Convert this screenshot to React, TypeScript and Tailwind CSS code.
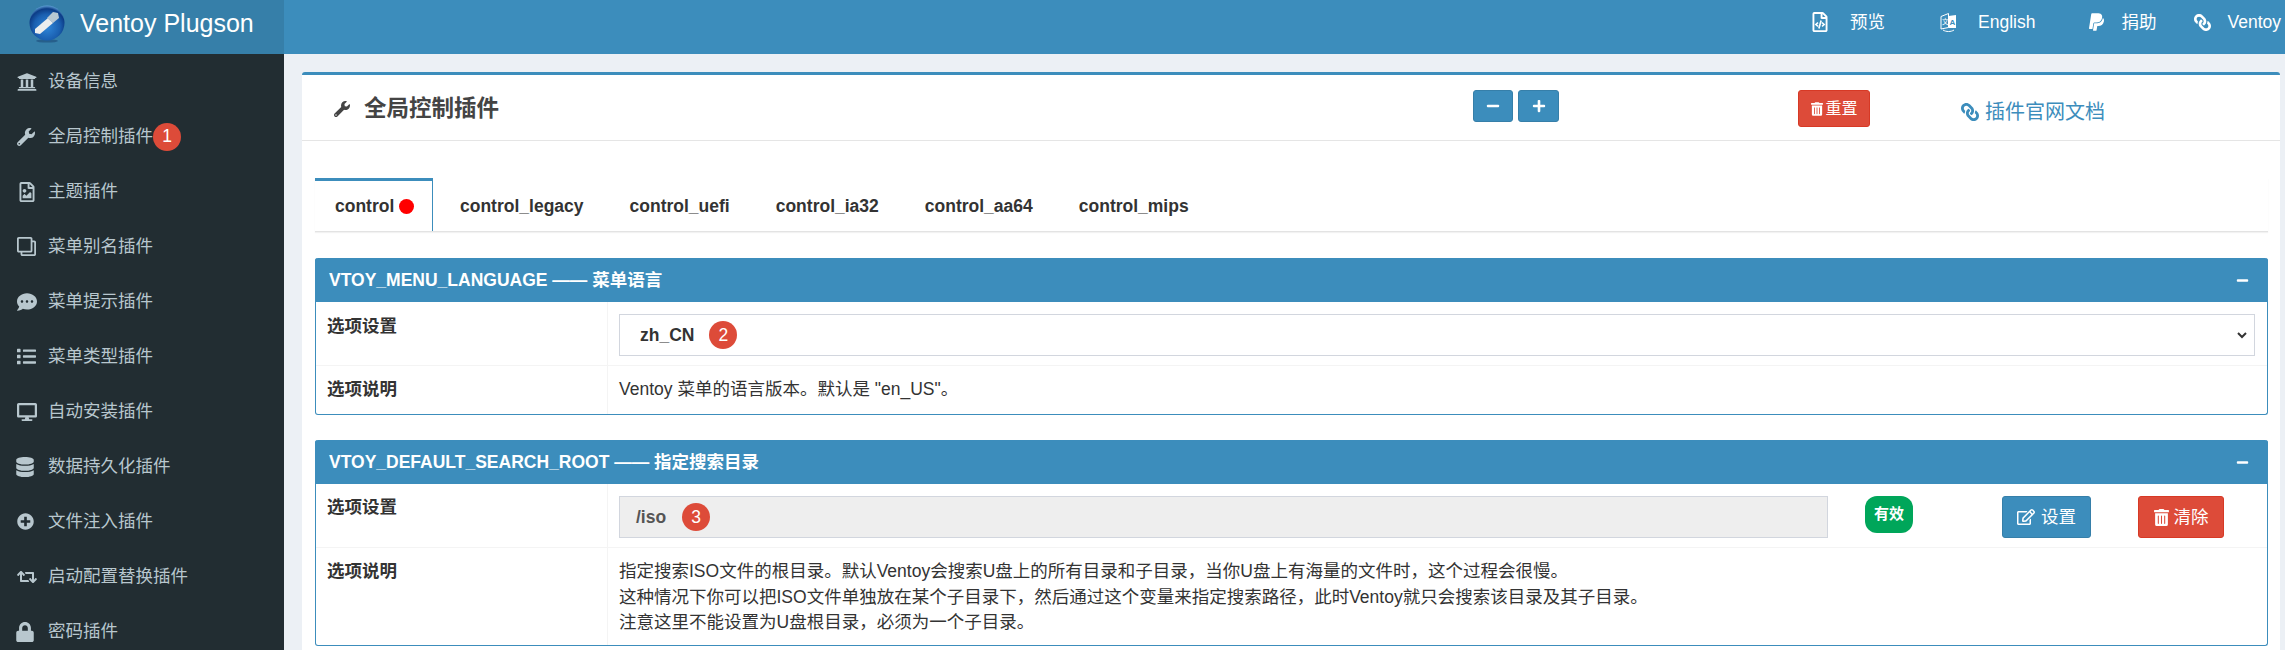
import { FaUniversity, FaWrench, FaRegFileImage, FaRegClone, FaCommentDots, FaList, FaDesktop, FaDatabase, FaPlusCircle, FaRetweet, FaLock, FaRegFileCode, FaPaypal, FaLink, FaTrashAlt, FaRegEdit, FaMinus, FaPlus } from 'react-icons/fa'

const font = { fontFamily: '"Liberation Sans", "Noto Sans CJK SC", sans-serif' }

const menu = [
  { icon: FaUniversity, label: '设备信息', cls: 'w-[20px] h-[20px]' },
  { icon: FaWrench, label: '全局控制插件', badge: '1', cls: 'w-[18px] h-[18px]' },
  { icon: FaRegFileImage, label: '主题插件', cls: 'w-[20px] h-[20px]' },
  { icon: FaRegClone, label: '菜单别名插件', cls: 'w-[19px] h-[19px] -scale-x-100' },
  { icon: FaCommentDots, label: '菜单提示插件', cls: 'w-[20px] h-[20px]' },
  { icon: FaList, label: '菜单类型插件', cls: 'w-[19px] h-[19px]' },
  { icon: FaDesktop, label: '自动安装插件', cls: 'w-[20px] h-[20px]' },
  { icon: FaDatabase, label: '数据持久化插件', cls: 'w-[20px] h-[20px] -ml-[2px]' },
  { icon: FaPlusCircle, label: '文件注入插件', cls: 'w-[17px] h-[17px]' },
  { icon: FaRetweet, label: '启动配置替换插件', cls: 'w-[20px] h-[20px]' },
  { icon: FaLock, label: '密码插件', cls: 'w-[20px] h-[20px] -ml-[2px]' },
]

const tabs = ['control_legacy', 'control_uefi', 'control_ia32', 'control_aa64', 'control_mips']

function Logo() {
  return (
    <svg viewBox="0 0 36 38" className="w-[36px] h-[38px] shrink-0">
      <defs>
        <radialGradient id="ball" cx="50%" cy="62%" r="62%">
          <stop offset="0%" stopColor="#2f86d8" />
          <stop offset="60%" stopColor="#1a5fb0" />
          <stop offset="85%" stopColor="#0c3c86" />
          <stop offset="100%" stopColor="#5f9fd6" />
        </radialGradient>
      </defs>
      <ellipse cx="18" cy="36" rx="11" ry="1.6" fill="#1c4a78" opacity="0.6" />
      <circle cx="18" cy="18" r="17.5" fill="url(#ball)" />
      <path d="M6 24l13-11 5 5-13 11-5-1z" fill="#eceeee" />
      <path d="M18 13l6-6 5 1 1 5-6 5z" fill="#b9c8d2" />
    </svg>
  )
}

function LanguageIcon() {
  return (
    <svg viewBox="0 0 17 20" className="w-[17px] h-[20px]">
      <path d="M1 4.5l7.5-3v14l-7.5 1.5z" fill="none" stroke="#fff" strokeWidth="1" />
      <path d="M8.5 4l7.5-1v13l-7.5 0z" fill="#fff" />
      <path d="M3 18c3 2 8 2 11 0" fill="none" stroke="#fff" strokeWidth="1" />
      <text x="2" y="12" fontSize="6.5" fill="#fff">文</text>
      <text x="9.6" y="12.5" fontSize="8" fontWeight="700" fill="#3c8dbc">A</text>
    </svg>
  )
}

function Badge({ n, className = '' }: { n: string; className?: string }) {
  return (
    <span className={`w-[28px] h-[28px] rounded-full bg-[#dd4b39] text-white text-[17.5px] font-normal flex items-center justify-center shrink-0 ${className}`}>
      {n}
    </span>
  )
}

function Panel({ title, children }: { title: string; children: React.ReactNode }) {
  return (
    <div className="border border-t-0 border-[#3c8dbc] rounded-[3px] bg-white">
      <div className="h-[44px] bg-[#3c8dbc] -mx-px rounded-t-[3px] flex items-center justify-between pl-[14px] pr-[19px] text-white font-bold text-[17.5px]">
        <span>{title}</span>
        <FaMinus className="w-[13px] h-[13px]" />
      </div>
      {children}
    </div>
  )
}

function Row({ label, last, h, pt, children }: { label: string; last?: boolean; h: string; pt: string; children: React.ReactNode }) {
  return (
    <div className={`flex ${h} ${last ? '' : 'border-b border-[#f4f4f4]'}`}>
      <div className={`w-[292px] shrink-0 border-r border-[#f4f4f4] pl-[11px] font-bold text-[#333] leading-[25px] ${pt}`}>{label}</div>
      <div className="flex-1 pl-[11px] pr-[12px] min-w-0">{children}</div>
    </div>
  )
}

export default function App() {
  return (
    <div className="w-[2285px] h-[650px] overflow-hidden flex flex-col text-[17.5px] text-[#333]" style={font}>
      <header className="h-[54px] flex bg-[#3c8dbc] text-white shrink-0">
        <div className="w-[284px] bg-[#367fa9] flex items-center pl-[29px] pb-[7px]">
          <Logo />
          <span className="ml-[15px] text-[25px]">Ventoy Plugson</span>
        </div>
        <div className="flex-1 flex items-center justify-end pr-[4px] pb-[10px]">
          <div className="flex items-center gap-[20px]">
            <FaRegFileCode className="w-[20px] h-[20px]" />
            <span>预览</span>
          </div>
          <div className="flex items-center gap-[21px] ml-[55px]">
            <LanguageIcon />
            <span>English</span>
          </div>
          <div className="flex items-center gap-[15px] ml-[52px]">
            <FaPaypal className="w-[19px] h-[20px]" />
            <span>捐助</span>
          </div>
          <div className="flex items-center gap-[16px] ml-[38px]">
            <FaLink className="w-[17px] h-[17px] -scale-x-100" />
            <span>Ventoy</span>
          </div>
        </div>
      </header>

      <div className="flex flex-1 min-h-0">
        <aside className="w-[284px] bg-[#222d32] text-[#b8c7ce] shrink-0">
          {menu.map(m => (
            <div key={m.label} className="h-[55px] flex items-center pl-[17px]">
              <span className="w-[31px] shrink-0 flex">
                <m.icon className={m.cls} />
              </span>
              <span>{m.label}</span>
              {m.badge && <Badge n={m.badge} />}
            </div>
          ))}
        </aside>

        <main className="flex-1 bg-[#ecf0f5] pt-[18px] pl-[18px] pr-[5px] min-w-0">
          <div className="bg-white border-t-[3px] border-[#3c8dbc] rounded-[3px] h-[700px]">
            <div className="h-[66px] border-b border-[#e5e5e5] flex items-center">
              <FaWrench className="w-[16px] h-[16px] ml-[32px] text-[#444] mt-[2px]" />
              <h1 className="ml-[14px] text-[22.5px] font-bold text-[#444] mt-[2px]">全局控制插件</h1>
              <div className="flex gap-[5px] ml-[974px] self-start mt-[15px]">
                <button className="w-[40px] h-[32px] bg-[#3c8dbc] border border-[#367fa9] rounded-[3px] flex items-center justify-center text-white"><FaMinus className="w-[14px] h-[14px]" /></button>
                <button className="w-[41px] h-[32px] bg-[#3c8dbc] border border-[#367fa9] rounded-[3px] flex items-center justify-center text-white"><FaPlus className="w-[14px] h-[14px]" /></button>
              </div>
              <button className="ml-[239px] self-start mt-[15px] w-[72px] h-[37px] bg-[#dd4b39] border border-[#d73925] rounded-[3px] text-white text-[16px] flex items-center justify-center gap-[3px]">
                <FaTrashAlt className="w-[12px] h-[14px]" />重置
              </button>
              <div className="ml-[91px] flex items-center gap-[6px] text-[#3c8dbc] text-[20px] mt-[8px]">
                <FaLink className="w-[18px] h-[18px] -scale-x-100" />
                <span>插件官网文档</span>
              </div>
            </div>

            <div className="pl-[13px] pr-[12px] pt-[37px]">
              <div className="h-[54px] flex items-stretch border-b border-[#e3e3e3] shadow-[0_1px_1px_rgba(0,0,0,0.05)] font-semibold text-[#333]">
                <div className="w-[118px] border-t-[3px] border-r border-[#3c8dbc] flex items-center pl-[20px] gap-[5px]">
                  control
                  <span className="w-[15px] h-[15px] rounded-full bg-[#ff0000]" />
                </div>
                {tabs.map((t, i) => (
                  <div key={t} className={`flex items-center pr-[19px] pt-[3px] ${i === 0 ? 'pl-[27px]' : 'pl-[27px]'}`}>{t}</div>
                ))}
              </div>

              <div className="mt-[26px]">
                <Panel title="VTOY_MENU_LANGUAGE —— 菜单语言">
                  <Row label="选项设置" h="h-[64px]" pt="pt-[12px]">
                    <div className="mt-[12px] h-[42px] border border-[#d2d6de] flex items-center pl-[20px] pr-[6px] font-semibold">
                      <span>zh_CN</span>
                      <Badge n="2" className="ml-[15px]" />
                      <svg viewBox="0 0 12 12" className="w-[12px] h-[12px] ml-auto" fill="none" stroke="#333" strokeWidth="2"><path d="M2 4l4 4 4-4" /></svg>
                    </div>
                  </Row>
                  <Row label="选项说明" h="h-[48px]" pt="pt-[11px]" last>
                    <p className="pt-[11px] leading-[25px]">Ventoy 菜单的语言版本。默认是 "en_US"。</p>
                  </Row>
                </Panel>
              </div>

              <div className="mt-[25px]">
                <Panel title="VTOY_DEFAULT_SEARCH_ROOT —— 指定搜索目录">
                  <Row label="选项设置" h="h-[64px]" pt="pt-[11px]">
                    <div className="flex items-start mt-[12px]">
                      <div className="w-[1209px] h-[42px] border border-[#d2d6de] bg-[#eeeeee] flex items-center pl-[16px] font-semibold text-[#555]">
                        <span>/iso</span>
                        <Badge n="3" className="ml-[16px]" />
                      </div>
                      <span className="ml-[37px] w-[48px] h-[37px] rounded-[12px] bg-[#00a65a] text-white font-bold text-[15px] flex items-center justify-center">有效</span>
                      <button className="ml-[89px] w-[89px] h-[42px] bg-[#3c8dbc] border border-[#367fa9] rounded-[3px] text-white flex items-center justify-center gap-[6px]">
                        <FaRegEdit className="w-[18px] h-[18px]" />设置
                      </button>
                      <button className="ml-[47px] w-[86px] h-[42px] bg-[#dd4b39] border border-[#d73925] rounded-[3px] text-white flex items-center justify-center gap-[5px]">
                        <FaTrashAlt className="w-[15px] h-[17px]" />清除
                      </button>
                    </div>
                  </Row>
                  <Row label="选项说明" h="h-[97px]" pt="pt-[11px]" last>
                    <p className="pt-[11px] leading-[25.5px]">
                      指定搜索ISO文件的根目录。默认Ventoy会搜索U盘上的所有目录和子目录，当你U盘上有海量的文件时，这个过程会很慢。<br />
                      这种情况下你可以把ISO文件单独放在某个子目录下，然后通过这个变量来指定搜索路径，此时Ventoy就只会搜索该目录及其子目录。<br />
                      注意这里不能设置为U盘根目录，必须为一个子目录。
                    </p>
                  </Row>
                </Panel>
              </div>
            </div>
          </div>
        </main>
      </div>
    </div>
  )
}
